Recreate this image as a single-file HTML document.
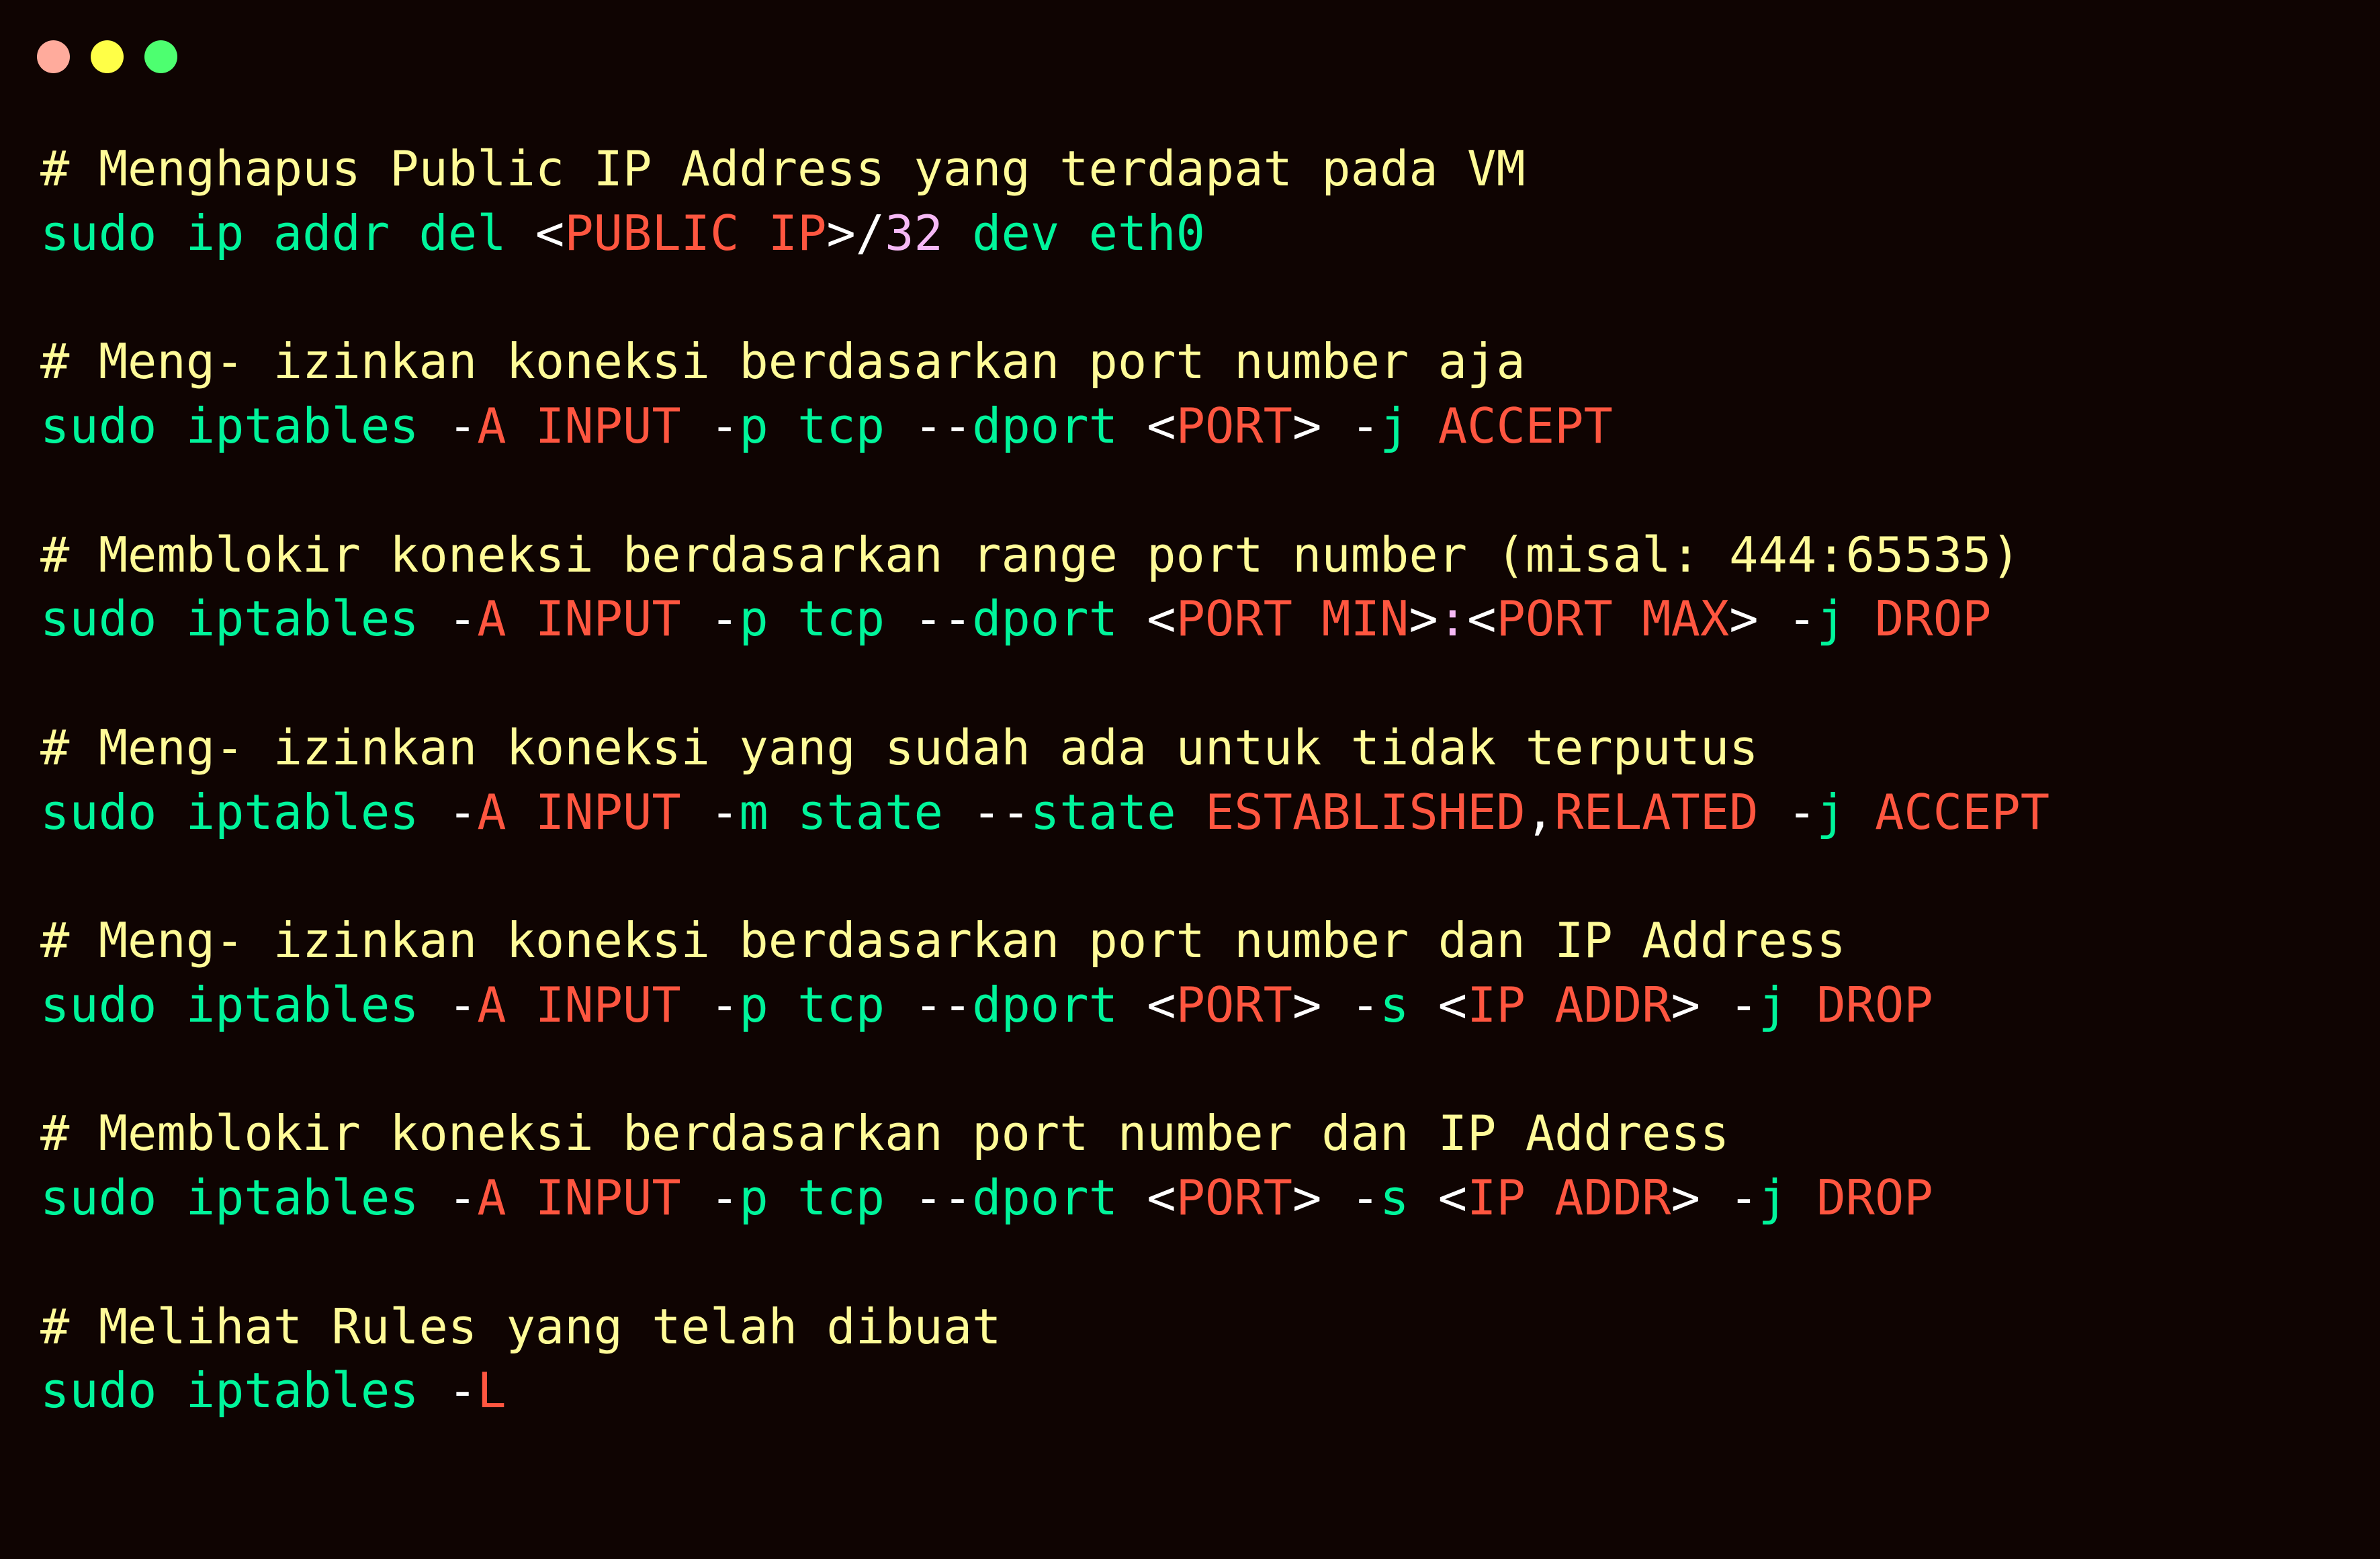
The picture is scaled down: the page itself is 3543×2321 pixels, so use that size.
<!DOCTYPE html>
<html><head><meta charset="utf-8"><style>
html,body{margin:0;padding:0;background:#0f0402;}
body{width:3543px;height:2321px;overflow:hidden;position:relative;}
.dot{position:absolute;top:60px;width:49px;height:49px;border-radius:50%;}
pre{position:absolute;left:60px;top:204px;margin:0;font-family:"DejaVu Sans Mono","Liberation Mono",monospace;font-size:72px;line-height:95.75px;color:#fff;white-space:pre;}
.c{color:#fffb98}.g{color:#00f59b}.r{color:#ff5640}.p{color:#f6b9f6}.w{color:#fff}
</style></head><body>
<div class="dot" style="left:55px;background:#ffab9c"></div>
<div class="dot" style="left:135px;background:#ffff47"></div>
<div class="dot" style="left:215px;background:#4dff70"></div>
<pre><span class="c"># Menghapus Public IP Address yang terdapat pada VM</span>
<span class="g">sudo ip addr del </span>&lt;<span class="r">PUBLIC IP</span>&gt;/<span class="p">32</span><span class="g"> dev eth0</span>

<span class="c"># Meng- izinkan koneksi berdasarkan port number aja</span>
<span class="g">sudo iptables </span>-<span class="r">A INPUT </span>-<span class="g">p tcp </span>--<span class="g">dport </span>&lt;<span class="r">PORT</span>&gt; -<span class="g">j </span><span class="r">ACCEPT</span>

<span class="c"># Memblokir koneksi berdasarkan range port number (misal: 444:65535)</span>
<span class="g">sudo iptables </span>-<span class="r">A INPUT </span>-<span class="g">p tcp </span>--<span class="g">dport </span>&lt;<span class="r">PORT MIN</span>&gt;<span class="p">:</span>&lt;<span class="r">PORT MAX</span>&gt; -<span class="g">j </span><span class="r">DROP</span>

<span class="c"># Meng- izinkan koneksi yang sudah ada untuk tidak terputus</span>
<span class="g">sudo iptables </span>-<span class="r">A INPUT </span>-<span class="g">m state </span>--<span class="g">state </span><span class="r">ESTABLISHED</span>,<span class="r">RELATED</span> -<span class="g">j </span><span class="r">ACCEPT</span>

<span class="c"># Meng- izinkan koneksi berdasarkan port number dan IP Address</span>
<span class="g">sudo iptables </span>-<span class="r">A INPUT </span>-<span class="g">p tcp </span>--<span class="g">dport </span>&lt;<span class="r">PORT</span>&gt; -<span class="g">s </span>&lt;<span class="r">IP ADDR</span>&gt; -<span class="g">j </span><span class="r">DROP</span>

<span class="c"># Memblokir koneksi berdasarkan port number dan IP Address</span>
<span class="g">sudo iptables </span>-<span class="r">A INPUT </span>-<span class="g">p tcp </span>--<span class="g">dport </span>&lt;<span class="r">PORT</span>&gt; -<span class="g">s </span>&lt;<span class="r">IP ADDR</span>&gt; -<span class="g">j </span><span class="r">DROP</span>

<span class="c"># Melihat Rules yang telah dibuat</span>
<span class="g">sudo iptables </span>-<span class="r">L</span></pre>
</body></html>
